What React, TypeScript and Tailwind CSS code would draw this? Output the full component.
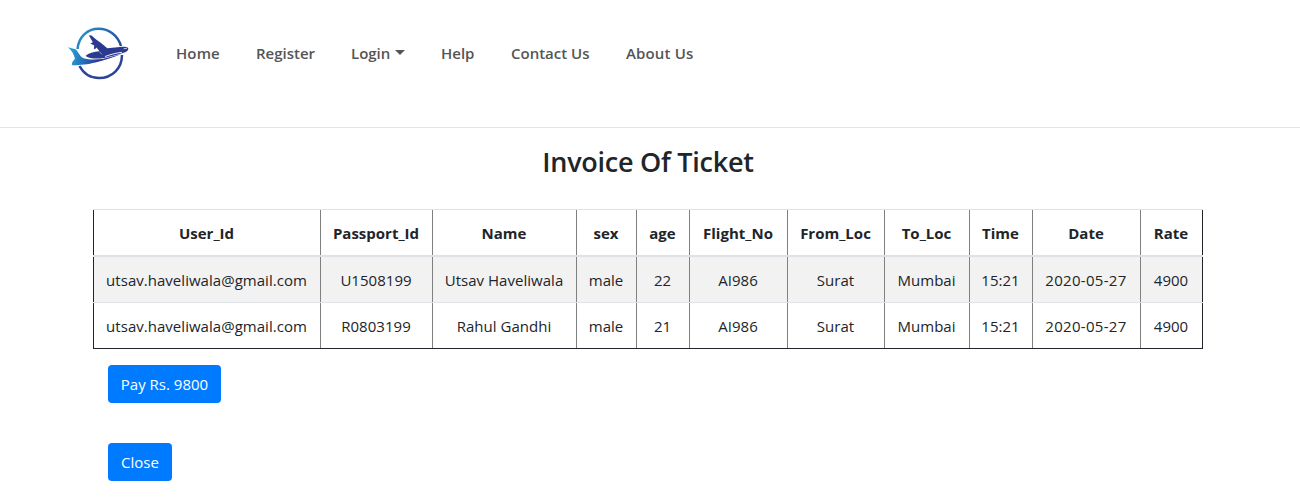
const columns = ['User_Id', 'Passport_Id', 'Name', 'sex', 'age', 'Flight_No', 'From_Loc', 'To_Loc', 'Time', 'Date', 'Rate'];

const rows = [
  ['utsav.haveliwala@gmail.com', 'U1508199', 'Utsav Haveliwala', 'male', '22', 'AI986', 'Surat', 'Mumbai', '15:21', '2020-05-27', '4900'],
  ['utsav.haveliwala@gmail.com', 'R0803199', 'Rahul Gandhi', 'male', '21', 'AI986', 'Surat', 'Mumbai', '15:21', '2020-05-27', '4900'],
];

const gridCols = 'grid grid-cols-[228px_112px_144px_60px_53px_98px_97px_85px_63px_108px_62px]';
const cell =
  'flex items-center justify-center whitespace-nowrap border-r border-[#808080] first:border-l first:border-l-[#212529] last:border-r-[#212529]';

function Logo() {
  return (
    <svg width="62" height="56" viewBox="0 0 62 56" fill="none" aria-label="Airline logo">
      <defs>
        <linearGradient id="ring" x1="8" y1="10" x2="54" y2="42" gradientUnits="userSpaceOnUse">
          <stop stopColor="#2593cf" />
          <stop offset="0.55" stopColor="#2a5cab" />
          <stop offset="1" stopColor="#2b3990" />
        </linearGradient>
        <linearGradient id="tail" x1="1" y1="30" x2="30" y2="34" gradientUnits="userSpaceOnUse">
          <stop stopColor="#27a0d8" />
          <stop offset="0.5" stopColor="#2471b8" />
          <stop offset="1" stopColor="#2b3990" />
        </linearGradient>
      </defs>
      <path d="M9.500 23C10.500 11 19.500 2.700 30.500 2.700 41 2.700 50 9.500 53 20" stroke="url(#ring)" strokeWidth="2.500" />
      <path d="M11.500 40C15.500 47.500 22.500 52 31 52 44 52 54 42.500 54 29" stroke="#2a4499" strokeWidth="2.500" />
      <path
        d="M0 21.300L7.500 23.300C10.500 26 12 31 15.500 32.300 21 34 28 33.600 34.500 33L53.500 28C45 31.500 36 34.500 27.500 36.500 20 38.300 10 39.500 4.500 39.300 3 38 4.500 35 7 33 6 28.500 4 25 0 21.300Z"
        fill="url(#tail)"
      />
      <path
        d="M17.500 30C20.500 27 25.500 25.700 31.500 25.300L28.500 21.500 27 23.300 25.800 22.500 26.300 19.600 22.300 17.500 24.800 16.300 20.800 9.300 23.500 9.500C27.500 13.500 34 17 39.300 22.300L54.500 20.800C58.500 20.300 60.800 21.300 60.300 23.300 59.500 26 55.500 27 51 28.200L36 32C29 33.200 20.500 32.500 17.500 30Z"
        fill="#2b3990"
      />
      <path d="M37 30.500C42.500 28.500 48 27 54 26.300" stroke="#fff" strokeWidth=".9" />
      <path d="M31.500 25.800L34 28.300" stroke="#fff" strokeWidth=".5" />
      <path d="M55.500 22.800L59 22.300" stroke="#fff" strokeWidth=".7" />
    </svg>
  );
}

export default function App() {
  return (
    <div className="h-[497px] w-full overflow-hidden bg-white font-['Open_Sans',sans-serif] text-base text-[#212529]">
      <header className="h-32 border-b border-[#e2e4e6] pl-[68px] pt-[26px]">
        <nav className="flex items-start text-[15px] font-semibold leading-6 text-[#555]">
          <Logo />
          <div className="flex pl-[46px] pt-[15px]">
            <a className="w-[80px] whitespace-nowrap tracking-[0.1px]">Home</a>
            <a className="w-[95px] whitespace-nowrap">Register</a>
            <a className="flex w-[90px] whitespace-nowrap">
              Login
              <svg width="10" height="5" viewBox="0 0 10 5" className="ml-[5px] mt-[9px]" fill="#555">
                <path d="M0 0h10L5 5Z" />
              </svg>
            </a>
            <a className="w-[70px] whitespace-nowrap">Help</a>
            <a className="w-[115px] whitespace-nowrap">Contact Us</a>
            <a className="whitespace-nowrap tracking-[0.15px]">About Us</a>
          </div>
        </nav>
      </header>

      <main className="pl-[93px]">
        <h1 className="w-[1110px] pt-[17px] text-center text-[27px] font-semibold leading-[34px] tracking-[-0.25px]">Invoice Of Ticket</h1>

        <div role="table" className="mt-[30px] w-[1110px] border-b border-[#212529]">
          <div role="row" className={`${gridCols} h-[46px] border-t border-[#dee2e6] text-[15px] font-bold`}>
            {columns.map((name) => (
              <div role="columnheader" key={name} className={cell}>
                <span className="pr-px pt-0.5">{name}</span>
              </div>
            ))}
          </div>
          {rows.map((row, r) => (
            <div
              role="row"
              key={r}
              className={`${gridCols} border-[#dee2e6] text-[15px] tracking-[0.03px] ${r === 0 ? 'h-[47px] border-t-2 bg-[#f2f2f2]' : 'h-[46px] border-t'}`}
            >
              {row.map((value, i) => (
                <div role="cell" key={i} className={`${cell} ${i === 9 ? 'tracking-[0.3px]' : ''}`}>
                  <span className="pr-px pt-0.5">{value}</span>
                </div>
              ))}
            </div>
          ))}
        </div>

        <div className="flex flex-col items-start gap-10 pl-[15px] pt-4 text-[15px] text-white">
          <button className="h-[38px] w-[113px] whitespace-nowrap rounded bg-[#007bff]">Pay Rs. 9800</button>
          <button className="h-[38px] w-16 rounded bg-[#007bff]">Close</button>
        </div>
      </main>
    </div>
  );
}
